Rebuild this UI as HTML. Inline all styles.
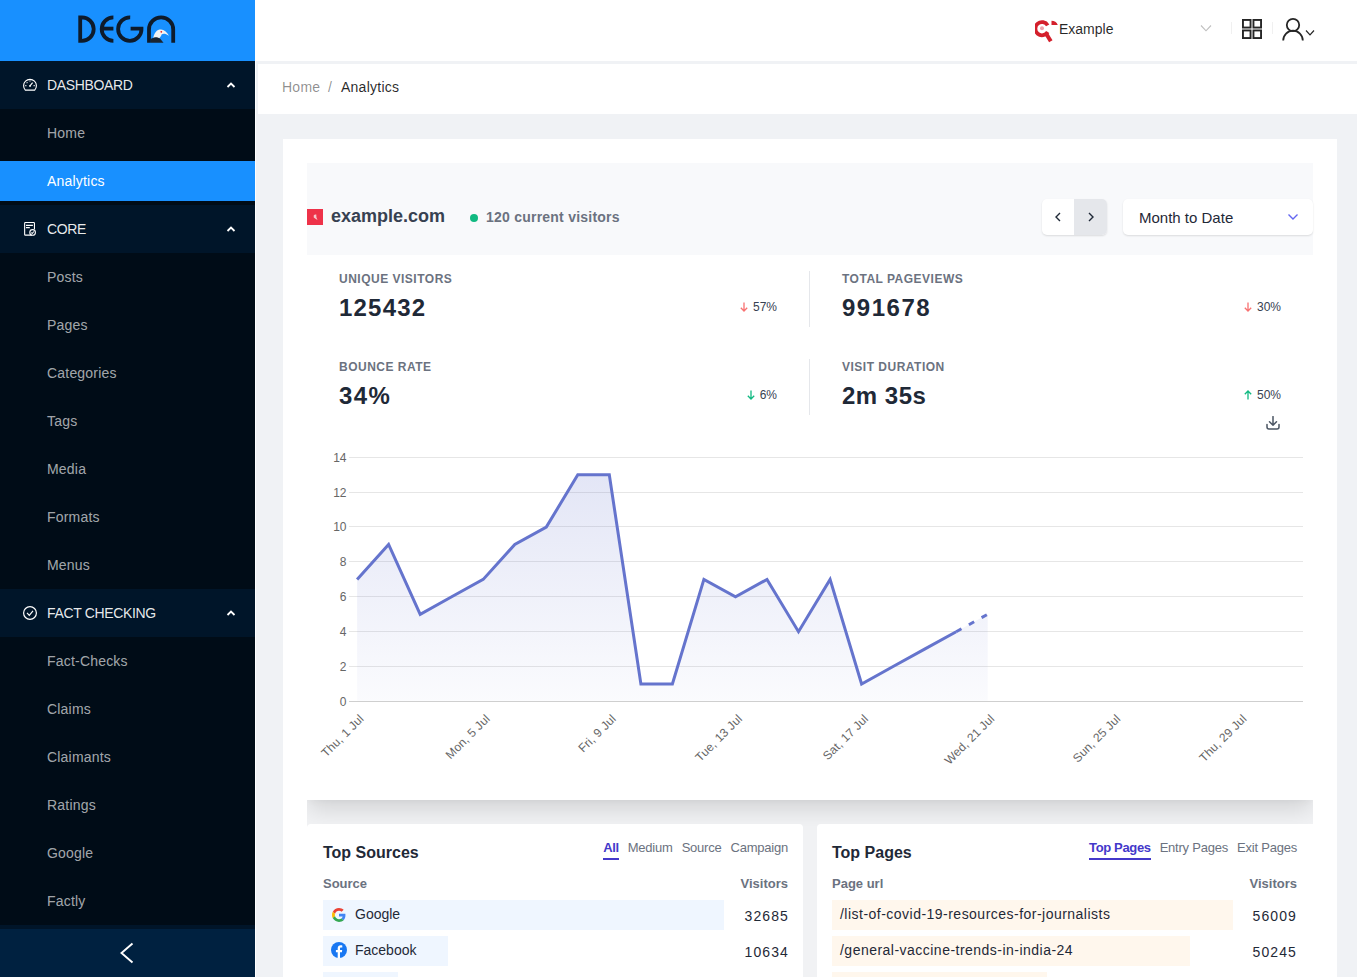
<!DOCTYPE html>
<html><head><meta charset="utf-8">
<style>
*{box-sizing:border-box;margin:0;padding:0}
html,body{width:1357px;height:977px;overflow:hidden;background:#f0f2f5;font-family:"Liberation Sans",sans-serif}
.a{position:absolute;white-space:nowrap}
#sider{position:absolute;left:0;top:0;width:255px;height:977px;background:#001529}
#logo{position:absolute;left:0;top:0;width:255px;height:61px;background:#1890ff}
.stitle{position:absolute;left:0;width:255px;height:48px;background:#001529;color:rgba(255,255,255,0.92);font-size:14px;line-height:48px}
.stitle .t{position:absolute;left:47px;top:0;letter-spacing:-0.35px}
.stitle svg{position:absolute}
.sub{position:absolute;left:0;width:255px;background:#000c17}
.item{position:absolute;left:0;width:255px;height:40px;line-height:40px;color:rgba(255,255,255,0.65);font-size:14px;padding-left:47px;letter-spacing:0.2px}
.item.sel{background:#1890ff;color:#fff}
#trigger{position:absolute;left:0;top:929px;width:255px;height:48px;background:#002140}
#header{position:absolute;left:255px;top:0;width:1102px;height:61px;background:#fff}
#bc{position:absolute;left:258px;top:64px;width:1099px;height:50px;background:#fff;font-size:14px;color:rgba(0,0,0,0.45);letter-spacing:0.25px}
#card{position:absolute;left:283px;top:139px;width:1054px;height:900px;background:#fff}
.lbl{font-size:12px;font-weight:bold;color:#6b7280;letter-spacing:0.5px}
.big{font-size:24px;font-weight:bold;color:#1f2937}
.pct{font-size:12px;color:#374151}
.tabs{position:absolute;display:flex;gap:9px;top:701px}
.tab{font-size:13px;color:#6b7280;letter-spacing:-0.22px;position:relative}
.tab.on{color:#4338ca;font-weight:bold;letter-spacing:-0.35px}
.tab.on:after{content:"";position:absolute;left:0;right:0;top:18px;height:2px;background:#4338ca}
.th{font-size:13px;font-weight:bold;color:#6b7280}
.num{font-size:14px;color:#1f2937;letter-spacing:1.1px;margin-right:0}
.rowtxt{font-size:14px;color:#1f2937}
</style></head><body>
<div id="sider">
  <div id="logo">
    <svg class="a" style="left:0;top:0" width="255" height="61" viewBox="0 0 255 61">
      <g fill="none" stroke="#0e1b2b" stroke-width="3.8">
        <path d="M80.2 17.4 H82 A11.7 11.7 0 0 1 82 40.8 H80.2 Z"/>
        <path d="M113.4 17.4 A11.7 11.7 0 0 0 113.4 40.8"/>
        <path d="M101 28.6 H113.4"/>
        <path d="M130.2 17.4 A11.7 11.7 0 1 0 141.5 28.6 H130.6"/>
        <path d="M149 42.7 V29.5 A12.1 12.1 0 0 1 173.2 29.5 V42.7"/>
      </g>
      <path d="M153.2 40.5 C153.3 34.5 155.5 30.8 159.5 29.6 C163 28.6 166.5 31 169 35.8 C166 33.7 163.5 33.3 161.8 34.3 C161 36 160.5 37.5 159 38.5 Z" fill="#f2f2f2"/>
      <path d="M151 42.7 V38.8 C153 37.8 155 37 157 37.3 L160 38.6 L163.5 42.7 Z" fill="#1a2430"/>
      <circle cx="161.3" cy="31.8" r="0.9" fill="#e02020"/>
    </svg>
  </div>
  <div class="stitle" style="top:61px"><span class="t">DASHBOARD</span>
    <svg style="left:23px;top:17px" width="14" height="14" viewBox="0 0 14 14" fill="none" stroke="#fff" stroke-width="1.1"><path d="M2.3 12.9 A6.4 6.4 0 1 1 11.7 12.9 Z" transform="translate(0,-0.75)"/><path d="M7 2.5V3.5M3.7 4.3l.7.7M2.3 7.6h1.1M10.6 7.6h1.1"/><path d="M7 7.9 L9.6 4.6"/><circle cx="7" cy="8" r="0.9" fill="#fff" stroke="none"/></svg>
    <svg style="left:226px;top:20px" width="10" height="8" viewBox="0 0 10 8" fill="none" stroke="#fff" stroke-width="1.8"><path d="M1.5 6 L5 2.5 L8.5 6"/></svg>
  </div>
  <div class="sub" style="top:109px;height:96px">
    <div class="item" style="top:4px">Home</div>
    <div class="item sel" style="top:52px">Analytics</div>
  </div>
  <div class="stitle" style="top:205px"><span class="t">CORE</span>
    <svg style="left:23px;top:16px" width="14" height="16" viewBox="0 0 14 16" fill="none" stroke="#fff" stroke-width="1.1"><path d="M8.8 14.15 H2.4 Q1.65 14.15 1.65 13.4 V2.3 Q1.65 1.55 2.4 1.55 H10.7 Q11.45 1.55 11.45 2.3 V8.3"/><path d="M3 4.4h6.9M3 6.6h3.8"/><circle cx="9.6" cy="11.4" r="2.8"/><path d="M8.3 11.5l.9 1 1.7-2"/></svg>
    <svg style="left:226px;top:20px" width="10" height="8" viewBox="0 0 10 8" fill="none" stroke="#fff" stroke-width="1.8"><path d="M1.5 6 L5 2.5 L8.5 6"/></svg>
  </div>
  <div class="sub" style="top:253px;height:336px">
    <div class="item" style="top:4px">Posts</div>
    <div class="item" style="top:52px">Pages</div>
    <div class="item" style="top:100px">Categories</div>
    <div class="item" style="top:148px">Tags</div>
    <div class="item" style="top:196px">Media</div>
    <div class="item" style="top:244px">Formats</div>
    <div class="item" style="top:292px">Menus</div>
  </div>
  <div class="stitle" style="top:589px"><span class="t">FACT CHECKING</span>
    <svg style="left:23px;top:17px" width="14" height="14" viewBox="0 0 14 14" fill="none" stroke="#fff" stroke-width="1.2"><circle cx="7" cy="7" r="6.4"/><path d="M4 6.8 L6.3 9.3 L10 4.9"/></svg>
    <svg style="left:226px;top:20px" width="10" height="8" viewBox="0 0 10 8" fill="none" stroke="#fff" stroke-width="1.8"><path d="M1.5 6 L5 2.5 L8.5 6"/></svg>
  </div>
  <div class="sub" style="top:637px;height:288px">
    <div class="item" style="top:4px">Fact-Checks</div>
    <div class="item" style="top:52px">Claims</div>
    <div class="item" style="top:100px">Claimants</div>
    <div class="item" style="top:148px">Ratings</div>
    <div class="item" style="top:196px">Google</div>
    <div class="item" style="top:244px">Factly</div>
  </div>
  <div id="trigger">
    <svg class="a" style="left:119px;top:13px" width="16" height="22" viewBox="0 0 16 22" fill="none" stroke="#fff" stroke-width="1.9"><path d="M13.5 1.5 L2.5 11 L13.5 20.5"/></svg>
  </div>
</div>

<div class="a" style="left:255px;top:61px;width:1px;height:916px;background:#fff"></div>
<div id="header">
  <svg class="a" style="left:780px;top:19px" width="24" height="24" viewBox="0 0 24 24">
    <path d="M12.7 6.4 A6.6 6.6 0 1 0 12.7 13" fill="none" stroke="#d4202c" stroke-width="3.8"/>
    <path d="M10.6 13.8 L15.8 22.2" stroke="#d4202c" stroke-width="4"/>
    <path d="M16.5 6 V1.8 Q21 1.8 22.8 6 Z" fill="#d4202c"/>
    <circle cx="7" cy="9.3" r="2" fill="#eea3ab"/>
  </svg>
  <span class="a" style="left:804px;top:21px;font-size:14px;color:rgba(0,0,0,0.85)">Example</span>
  <svg class="a" style="left:945px;top:24px" width="12" height="9" viewBox="0 0 12 9" fill="none" stroke="#bfbfbf" stroke-width="1.1"><path d="M1 1.5 L6 6.8 L11 1.5"/></svg>
  <div class="a" style="left:976px;top:22px;width:1px;height:12px;background:#f0f0f0"></div>
  <svg class="a" style="left:987px;top:19px" width="20" height="20" viewBox="0 0 20 20" fill="none" stroke="#262626" stroke-width="1.9"><rect x="0.95" y="0.95" width="7.6" height="7.6"/><rect x="11.45" y="0.95" width="7.6" height="7.6"/><rect x="0.95" y="11.45" width="7.6" height="7.6"/><rect x="11.45" y="11.45" width="7.6" height="7.6"/></svg>
  <div class="a" style="left:1017px;top:22px;width:1px;height:12px;background:#f0f0f0"></div>
  <svg class="a" style="left:1027px;top:17px" width="22" height="24" viewBox="0 0 22 24" fill="none" stroke="#262626" stroke-width="1.8"><circle cx="11" cy="8" r="6.2"/><path d="M1.2 23.5 A9.8 9.8 0 0 1 20.8 23.5"/></svg>
  <svg class="a" style="left:1050px;top:29px" width="10" height="8" viewBox="0 0 10 8" fill="none" stroke="#262626" stroke-width="1.2"><path d="M1 1.5 L5 5.8 L9 1.5"/></svg>
</div>

<div id="bc">
  <span class="a" style="left:24px;top:15px">Home</span>
  <span class="a" style="left:70px;top:15px">/</span>
  <span class="a" style="left:83px;top:15px;color:rgba(0,0,0,0.85)">Analytics</span>
</div>

<div id="card">
  <!-- site header band -->
  <div class="a" style="left:24px;top:24px;width:1006px;height:92px;background:#f8f9fb"></div>
  <div class="a" style="left:24px;top:70px;width:16px;height:16px;background:#ee3249"></div>
  <svg class="a" style="left:28.5px;top:74.5px" width="7" height="7" viewBox="0 0 6 7"><path d="M1.2 1.5 Q2 0.2 3.8 0.6 L3.9 3.3 L5 5.9 L2.6 4.6 Q0.6 3.8 1.2 1.5Z" fill="#f6c6cc"/></svg>
  <span class="a" style="left:48px;top:67px;font-size:18px;font-weight:bold;color:#374151">example.com</span>
  <div class="a" style="left:187px;top:75px;width:8px;height:8px;border-radius:50%;background:#10b981"></div>
  <span class="a" style="left:203px;top:70px;font-size:14px;font-weight:bold;color:#6b7280;letter-spacing:0.23px">120 current visitors</span>

  <div class="a" style="left:759px;top:60px;width:65px;height:36px;border-radius:5px;background:#fff;box-shadow:0 1px 2px rgba(0,0,0,0.12);overflow:hidden">
    <div class="a" style="left:32px;top:0;width:33px;height:36px;background:#e5e7eb;border-left:1px solid #e5e7eb"></div>
    <svg class="a" style="left:11px;top:12px" width="10" height="12" viewBox="0 0 10 12" fill="none" stroke="#1f2937" stroke-width="1.4"><path d="M7 2 L3 6 L7 10"/></svg>
    <svg class="a" style="left:44px;top:12px" width="10" height="12" viewBox="0 0 10 12" fill="none" stroke="#1f2937" stroke-width="1.4"><path d="M3 2 L7 6 L3 10"/></svg>
  </div>
  <div class="a" style="left:840px;top:60px;width:190px;height:36px;border-radius:5px;background:#fff;box-shadow:0 1px 2px rgba(0,0,0,0.12)">
    <span class="a" style="left:16px;top:10px;font-size:15px;color:#1f2937">Month to Date</span>
    <svg class="a" style="left:164px;top:13px" width="12" height="10" viewBox="0 0 12 10" fill="none" stroke="#6366f1" stroke-width="1.4"><path d="M1.5 2.5 L6 7 L10.5 2.5"/></svg>
  </div>

  <!-- stats -->
  <span class="a lbl" style="left:56px;top:133px">UNIQUE VISITORS</span>
  <span class="a big" style="left:56px;top:155px;letter-spacing:1.2px">125432</span>
  <span class="a pct" style="right:560px;top:161px"><svg width="8" height="10" viewBox="0 0 8 10" style="vertical-align:-1px;margin-right:5px" fill="none" stroke="#f87171" stroke-width="1.3"><path d="M4 0.5V9M0.8 5.8L4 9L7.2 5.8"/></svg>57%</span>
  <div class="a" style="left:526px;top:132px;width:1px;height:56px;background:#e5e7eb"></div>
  <span class="a lbl" style="left:559px;top:133px">TOTAL PAGEVIEWS</span>
  <span class="a big" style="left:559px;top:155px;letter-spacing:1.5px">991678</span>
  <span class="a pct" style="right:56px;top:161px"><svg width="8" height="10" viewBox="0 0 8 10" style="vertical-align:-1px;margin-right:5px" fill="none" stroke="#f87171" stroke-width="1.3"><path d="M4 0.5V9M0.8 5.8L4 9L7.2 5.8"/></svg>30%</span>

  <span class="a lbl" style="left:56px;top:221px">BOUNCE RATE</span>
  <span class="a big" style="left:56px;top:243px;letter-spacing:1.4px">34%</span>
  <span class="a pct" style="right:560px;top:249px"><svg width="8" height="10" viewBox="0 0 8 10" style="vertical-align:-1px;margin-right:5px" fill="none" stroke="#10b981" stroke-width="1.3"><path d="M4 0.5V9M0.8 5.8L4 9L7.2 5.8"/></svg>6%</span>
  <div class="a" style="left:526px;top:220px;width:1px;height:56px;background:#e5e7eb"></div>
  <span class="a lbl" style="left:559px;top:221px">VISIT DURATION</span>
  <span class="a big" style="left:559px;top:243px;letter-spacing:0.5px">2m 35s</span>
  <span class="a pct" style="right:56px;top:249px"><svg width="8" height="10" viewBox="0 0 8 10" style="vertical-align:-1px;margin-right:5px" fill="none" stroke="#10b981" stroke-width="1.3"><path d="M4 9.5V1M0.8 4.2L4 1L7.2 4.2"/></svg>50%</span>
  <svg class="a" style="left:983px;top:277px" width="14" height="14" viewBox="0 0 14 14" fill="none" stroke="#4b5563" stroke-width="1.5" stroke-linecap="round" stroke-linejoin="round"><path d="M7 0.6V9.3M3.5 5.8L7 9.3L10.5 5.8"/><path d="M1 8.6V10.9Q1 12.9 3 12.9H11Q13 12.9 13 10.9V8.6"/></svg>

  <!-- chart -->
  <svg class="a" style="left:0;top:0" width="1054" height="700" viewBox="283 139 1054 700" id="chart">
<defs><linearGradient id="gf" gradientUnits="userSpaceOnUse" x1="0" y1="445" x2="0" y2="745"><stop offset="0" stop-color="rgb(101,116,205)" stop-opacity="0.2"/><stop offset="1" stop-color="rgb(101,116,205)" stop-opacity="0"/></linearGradient></defs>
<path d="M349 701.5 H1303" stroke="#cfcfcf" stroke-width="1"/>
<text x="346.5" y="705.8" text-anchor="end" font-size="12" fill="#666">0</text>
<path d="M349 666.5 H1303" stroke="#e6e6e6" stroke-width="1"/>
<text x="346.5" y="670.8" text-anchor="end" font-size="12" fill="#666">2</text>
<path d="M349 631.5 H1303" stroke="#e6e6e6" stroke-width="1"/>
<text x="346.5" y="635.8" text-anchor="end" font-size="12" fill="#666">4</text>
<path d="M349 596.5 H1303" stroke="#e6e6e6" stroke-width="1"/>
<text x="346.5" y="600.8" text-anchor="end" font-size="12" fill="#666">6</text>
<path d="M349 561.5 H1303" stroke="#e6e6e6" stroke-width="1"/>
<text x="346.5" y="565.8" text-anchor="end" font-size="12" fill="#666">8</text>
<path d="M349 526.5 H1303" stroke="#e6e6e6" stroke-width="1"/>
<text x="346.5" y="530.8" text-anchor="end" font-size="12" fill="#666">10</text>
<path d="M349 492.5 H1303" stroke="#e6e6e6" stroke-width="1"/>
<text x="346.5" y="496.8" text-anchor="end" font-size="12" fill="#666">12</text>
<path d="M349 457.5 H1303" stroke="#e6e6e6" stroke-width="1"/>
<text x="346.5" y="461.8" text-anchor="end" font-size="12" fill="#666">14</text>
<polygon points="357.1,700.7 357.1,579.4 388.6,544.5 420.2,614.3 451.7,596.8 483.2,579.4 514.8,544.5 546.3,527.1 577.8,474.8 609.3,474.8 640.9,684.0 672.4,684.0 703.9,579.4 735.5,596.8 767.0,579.4 798.5,631.7 830.1,579.4 861.6,684.0 893.1,666.5 924.6,649.1 956.2,631.7 987.7,614.3 987.7,700.7" fill="url(#gf)"/>
<polyline points="357.1,579.4 388.6,544.5 420.2,614.3 451.7,596.8 483.2,579.4 514.8,544.5 546.3,527.1 577.8,474.8 609.3,474.8 640.9,684.0 672.4,684.0 703.9,579.4 735.5,596.8 767.0,579.4 798.5,631.7 830.1,579.4 861.6,684.0 893.1,666.5 924.6,649.1 956.2,631.7" fill="none" stroke="#6574cd" stroke-width="3" stroke-linejoin="miter"/>
<path d="M956.2,631.7 L987.7,614.3" stroke="#6574cd" stroke-width="3" stroke-dasharray="6 8.5"/>
<text transform="translate(364.6,719.5) rotate(-45)" text-anchor="end" font-size="12" fill="#666" letter-spacing="0.15">Thu, 1 Jul</text>
<text transform="translate(490.7,719.5) rotate(-45)" text-anchor="end" font-size="12" fill="#666" letter-spacing="0.15">Mon, 5 Jul</text>
<text transform="translate(616.8,719.5) rotate(-45)" text-anchor="end" font-size="12" fill="#666" letter-spacing="0.15">Fri, 9 Jul</text>
<text transform="translate(743.0,719.5) rotate(-45)" text-anchor="end" font-size="12" fill="#666" letter-spacing="0.15">Tue, 13 Jul</text>
<text transform="translate(869.1,719.5) rotate(-45)" text-anchor="end" font-size="12" fill="#666" letter-spacing="0.15">Sat, 17 Jul</text>
<text transform="translate(995.2,719.5) rotate(-45)" text-anchor="end" font-size="12" fill="#666" letter-spacing="0.15">Wed, 21 Jul</text>
<text transform="translate(1121.3,719.5) rotate(-45)" text-anchor="end" font-size="12" fill="#666" letter-spacing="0.15">Sun, 25 Jul</text>
<text transform="translate(1247.4,719.5) rotate(-45)" text-anchor="end" font-size="12" fill="#666" letter-spacing="0.15">Thu, 29 Jul</text>
  </svg>

  <!-- lower area -->
  <div class="a" style="left:24px;top:661px;width:1006px;height:300px;background:#f1f2f4;overflow:hidden"><div class="a" style="left:0;top:-100px;width:1006px;height:100px;background:#fff;border-radius:0 0 6px 6px;box-shadow:0 12px 22px -2px rgba(0,0,0,0.12),0 4px 6px -2px rgba(0,0,0,0.03)"></div></div>
  <div class="a" style="left:24px;top:685px;width:496px;height:300px;background:#fff;border-radius:4px 4px 0 0"></div>
  <div class="a" style="left:534px;top:685px;width:520px;height:300px;background:#fff;border-radius:4px 0 0 0"></div>

  <span class="a" style="left:40px;top:705px;font-size:16px;font-weight:bold;color:#1f2937">Top Sources</span>
  <div class="tabs" style="right:549px"><span class="tab on">All</span><span class="tab">Medium</span><span class="tab">Source</span><span class="tab">Campaign</span></div>
  <span class="a th" style="left:40px;top:737px">Source</span>
  <span class="a th" style="right:549px;top:737px">Visitors</span>
  <div class="a" style="left:40px;top:761px;width:401px;height:30px;background:#eff6ff"></div>
  <div class="a" style="left:40px;top:797px;width:125px;height:30px;background:#eff6ff"></div>
  <div class="a" style="left:40px;top:833px;width:75px;height:30px;background:#eff6ff"></div>
  <svg class="a" style="left:49px;top:769px" width="14" height="14" viewBox="0 0 48 48"><path fill="#EA4335" d="M24 9.5c3.5 0 6.6 1.2 9.1 3.6l6.8-6.8C35.8 2.4 30.3 0 24 0 14.6 0 6.6 5.4 2.6 13.3l7.9 6.2C12.4 13.6 17.7 9.5 24 9.5z"/><path fill="#4285F4" d="M46.1 24.5c0-1.6-.1-3.1-.4-4.5H24v9h12.4c-.5 2.9-2.2 5.3-4.6 6.9l7.7 6C43.9 37.7 46.1 31.7 46.1 24.5z"/><path fill="#FBBC05" d="M10.5 28.6c-.5-1.4-.8-3-.8-4.6s.3-3.2.8-4.6l-7.9-6.2C.9 16.5 0 20.1 0 24s.9 7.5 2.6 10.8l7.9-6.2z"/><path fill="#34A853" d="M24 48c6.5 0 11.9-2.1 15.9-5.8l-7.7-6c-2.1 1.4-4.9 2.3-8.2 2.3-6.3 0-11.6-4.2-13.5-10l-7.9 6.2C6.6 42.6 14.6 48 24 48z"/></svg>
  <svg class="a" style="left:48px;top:803px" width="16" height="16" viewBox="0 0 16 16"><circle cx="8" cy="8" r="8" fill="#1877f2"/><path d="M9 16V10.2h1.9l.3-2.3H9V6.5c0-.7.2-1.1 1.1-1.1h1.2V3.4c-.2 0-.9-.1-1.7-.1-1.7 0-2.9 1-2.9 3V7.9H4.9v2.3h1.8V16z" fill="#fff"/></svg>
  <span class="a rowtxt" style="left:72px;top:767px">Google</span>
  <span class="a rowtxt" style="left:72px;top:803px">Facebook</span>
  <span class="a num" style="right:548px;top:769px">32685</span>
  <span class="a num" style="right:548px;top:805px">10634</span>

  <span class="a" style="left:549px;top:705px;font-size:16px;font-weight:bold;color:#1f2937">Top Pages</span>
  <div class="tabs" style="right:40px"><span class="tab on">Top Pages</span><span class="tab">Entry Pages</span><span class="tab">Exit Pages</span></div>
  <span class="a th" style="left:549px;top:737px">Page url</span>
  <span class="a th" style="right:40px;top:737px">Visitors</span>
  <div class="a" style="left:549px;top:761px;width:401px;height:30px;background:#fff7ed"></div>
  <div class="a" style="left:549px;top:797px;width:358px;height:30px;background:#fff7ed"></div>
  <div class="a" style="left:549px;top:833px;width:215px;height:30px;background:#fff7ed"></div>
  <span class="a rowtxt" style="left:557px;top:767px;letter-spacing:0.48px">/list-of-covid-19-resources-for-journalists</span>
  <span class="a rowtxt" style="left:557px;top:803px;letter-spacing:0.48px">/general-vaccine-trends-in-india-24</span>
  <span class="a num" style="right:40px;top:769px">56009</span>
  <span class="a num" style="right:40px;top:805px">50245</span>
</div>
</body></html>
